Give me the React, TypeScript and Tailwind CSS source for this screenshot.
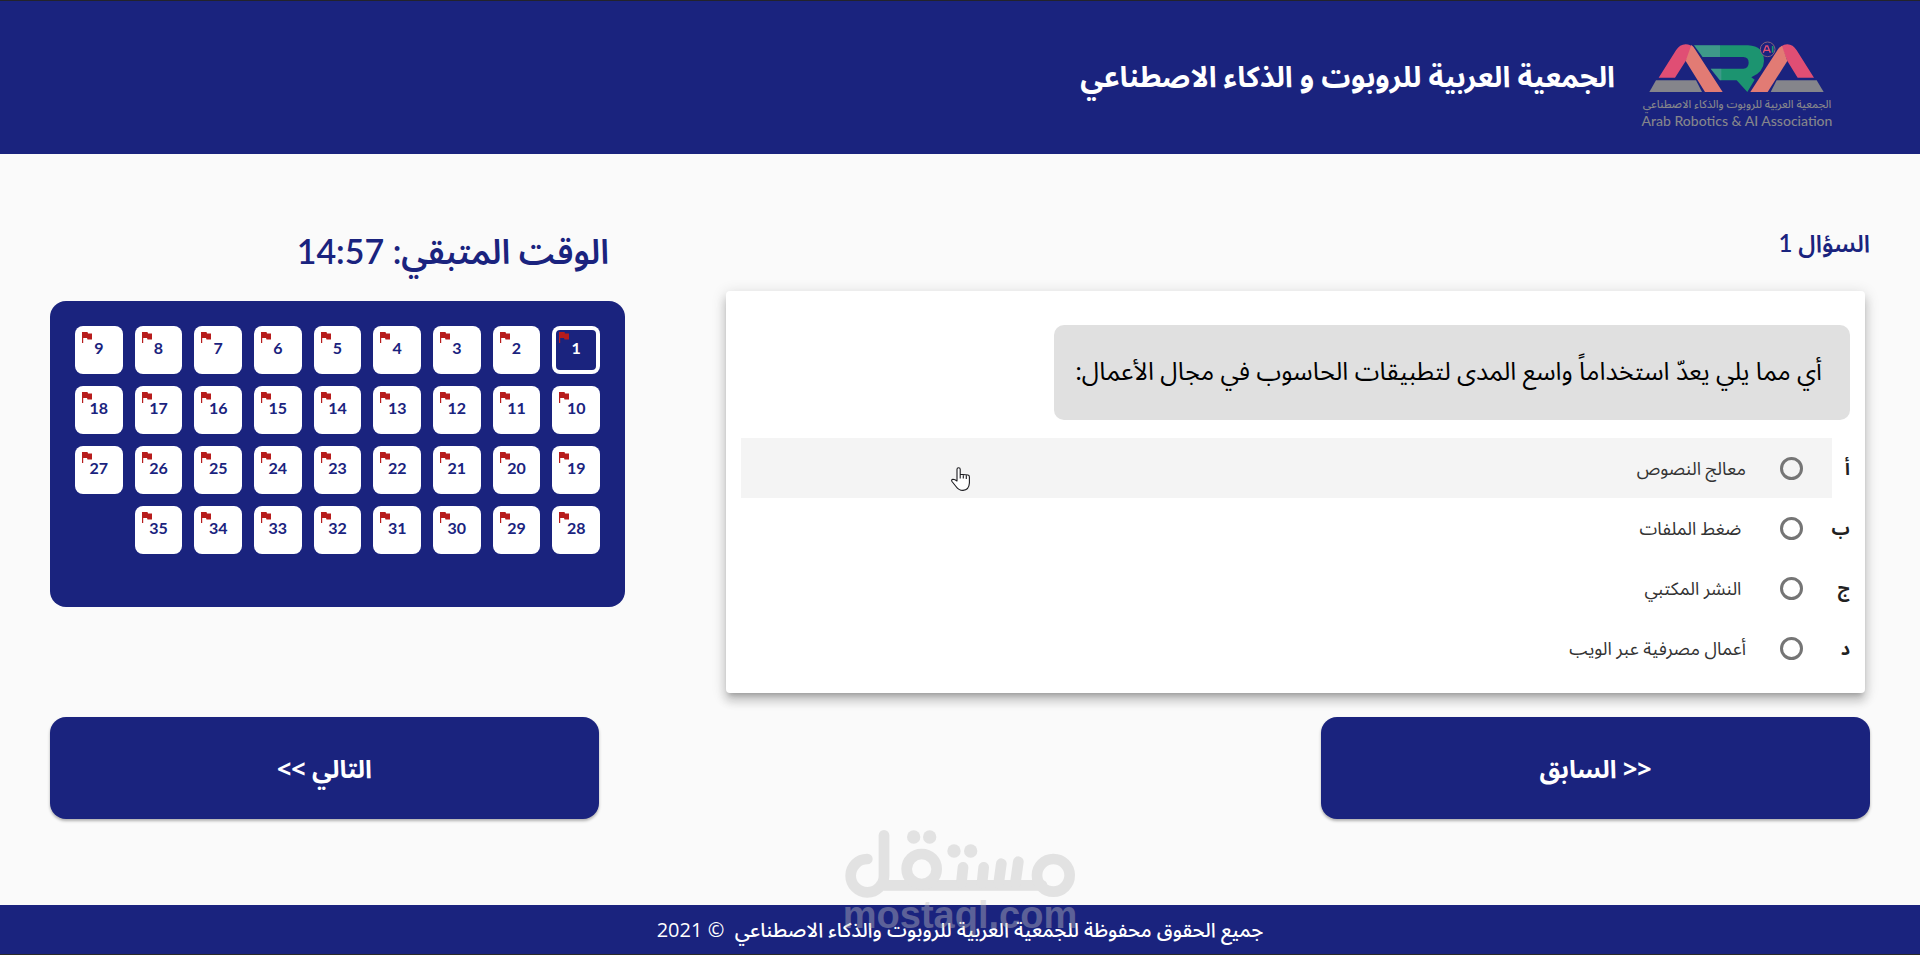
import { useState } from "react";

const QUESTION_COUNT = 35;

const options = [
  { letter: "أ", text: "معالج النصوص" },
  { letter: "ب", text: " ضغط الملفات" },
  { letter: "ج", text: " النشر المكتبي" },
  { letter: "د", text: "أعمال مصرفية عبر الويب" },
];

function Logo() {
  return (
    <div className="flex w-[190px] flex-col items-center pt-[14px] text-[#85858b]">
      <svg viewBox="66 32 570 159" className="h-[53px] w-[190px]" aria-hidden="true">
        <path d="M116 145 168 63Q179 45 197 45Q212 45 222 57L197 95 165 145Z" fill="#e04e74" />
        <path d="M197 95 214 47Q220 51 225 60L308 188H255Z" fill="#e27b74" />
        <path d="M108 153H228L246 188H88Z" fill="#85858b" />
        <path
          d="M222 48H384Q432 50 432 95Q431 128 394 144L404 151 382 188 350 153H300L272 118H370Q386 116 386 100Q386 84 370 83H248Z"
          fill="#1c9470"
        />
        <path d="M222 48H300V83H248ZM272 118H304V153H299Z" fill="#7fa4b8" opacity="0.35" />
        <path d="M582 145 530 63Q519 45 502 45Q492 45 484 51L502 95 533 145Z" fill="#e04e74" />
        <path d="M502 95 486 49Q479 53 474 60L391 188H443Z" fill="#e27b74" />
        <path d="M470 153H590L611 188H452Z" fill="#85858b" />
        <circle cx="443" cy="60" r="22" fill="#1a237e" stroke="#85617f" strokeWidth="3" />
        <path d="M430 70 438 50H443L451 70M434 63H447" fill="none" stroke="#e04e74" strokeWidth="4" />
        <path d="M458 50V70" stroke="#1c9470" strokeWidth="5" />
      </svg>
      <span className="mt-1 font-['Noto_Sans_Arabic','DejaVu_Sans',sans-serif] text-[11px] leading-4 font-medium whitespace-nowrap">
        الجمعية العربية للروبوت والذكاء الاصطناعي
      </span>
      <span dir="ltr" className="font-[Lato,sans-serif] text-[14px] leading-4 font-medium whitespace-nowrap">
        Arab Robotics &amp; AI Association
      </span>
    </div>
  );
}

function Flag() {
  return (
    <svg viewBox="0 0 10 11" className="absolute top-[6px] left-[7px] h-[11px] w-[10px]" aria-hidden="true">
      <path d="M0 0H5.500L6 1.500H10V7.500H5.500L5 6H1.200V11H0Z" fill="#b71c1c" />
    </svg>
  );
}

function HandPointer() {
  return (
    <svg viewBox="0 0 19 24" className="absolute top-[29px] left-[210px] h-6 w-[19px]" aria-hidden="true">
      <path
        d="M6 14V2.300A1.600 1.600 0 0 1 9.200 2.300V7.200L17 8Q18.400 8.300 18.400 10V16Q18 23 12 23.400Q7.500 23.400 5 19.500L1 14.500Q0 12.500 2 12.300Q4 12.300 6 14ZM9.200 7V11.500M12.300 7.500V11.500M15.300 7.800V12"
        fill="#fff"
        stroke="#1b1b1f"
        strokeWidth="1.100"
        strokeLinejoin="round"
      />
    </svg>
  );
}

function Watermark() {
  return (
    <div
      dir="ltr"
      className="pointer-events-none absolute bottom-[23px] left-1/2 flex w-[260px] -translate-x-1/2 flex-col items-center text-[#bfbfbf] opacity-40"
    >
      <svg viewBox="0 24 780 210" className="h-[70px] w-[260px]" aria-hidden="true">
        <g fill="none" stroke="currentColor" strokeWidth="32" strokeLinecap="round">
          <path d="M112 117A50 50 0 1 0 162 168V46M152 196H636" />
          <circle cx="275" cy="147" r="45" />
          <circle cx="670" cy="166" r="49" />
          <path d="M399 142 394 190M461 142 456 190M514 131 506 190M565 125 556 190" />
        </g>
        <g fill="currentColor">
          <circle cx="251" cy="51" r="20" />
          <circle cx="299" cy="51" r="20" />
          <circle cx="372" cy="93" r="20" />
          <circle cx="422" cy="93" r="20" />
        </g>
      </svg>
      <span className="font-['Liberation_Sans',sans-serif] text-[38px] leading-[34px] font-bold">mostaql.com</span>
    </div>
  );
}

export default function App() {
  const [current, setCurrent] = useState(1);
  const [answer, setAnswer] = useState<string | null>(null);
  const numbers = Array.from({ length: QUESTION_COUNT }, (_, i) => i + 1);

  return (
    <div
      dir="rtl"
      lang="ar"
      className="relative flex min-h-screen flex-col bg-[#fafafa] font-[Lato,'Noto_Sans_Arabic','DejaVu_Sans',sans-serif] text-[#212121]"
    >
      <header className="flex h-[154px] items-center gap-[27px] border-t border-[#23232b] bg-[#1a237e] px-[88px]">
        <Logo />
        <h1 className="pb-1 text-[29px] leading-[40px] font-bold text-white">
          الجمعية العربية للروبوت و الذكاء الاصطناعي
        </h1>
      </header>

      <main className="flex grow flex-col gap-6 px-[50px] pt-[69px] pb-[86px]">
        <div className="grid grid-cols-[1144fr_575fr] gap-x-[101px]">
          <section>
            <h2 className="mb-[28px] text-[24px] leading-[40px] font-semibold text-[#1a237e]">السؤال 1</h2>
            <div className="ms-[5px] rounded bg-white px-[15px] pt-[34px] pb-[15px] shadow-[0_5px_5px_-3px_rgba(0,0,0,0.2),0_8px_10px_1px_rgba(0,0,0,0.14),0_3px_14px_2px_rgba(0,0,0,0.12)]">
              <p className="w-fit rounded-[10px] bg-[#e0e0e0] ps-[28px] pe-[22px] pt-[25px] pb-[29px] text-[25px] leading-[41px] font-normal text-black">
                أي مما يلي يعدّ استخداماً واسع المدى لتطبيقات الحاسوب في مجال الأعمال:
              </p>
              <div role="radiogroup" className="mt-[18px]">
                {options.map((o, i) => (
                  <div key={o.letter} className="flex h-[60px] items-center">
                    <span className="w-[18px] text-[18px] leading-6 font-bold">{o.letter}</span>
                    <label
                      className={
                        i === 0
                          ? "relative flex h-full grow items-center gap-[34px] bg-[#f4f4f4] ps-[29px]"
                          : "relative flex h-full grow items-center gap-[34px] ps-[29px]"
                      }
                    >
                      <input
                        type="radio"
                        name="answer"
                        value={o.letter}
                        checked={answer === o.letter}
                        onChange={() => setAnswer(o.letter)}
                        className="h-[23px] w-[23px] appearance-none rounded-full border-[3px] border-[#757575] checked:bg-[#1a237e]"
                      />
                      <span className="text-[18px] leading-6 whitespace-pre text-[#333333]">{o.text}</span>
                      {i === 0 && <HandPointer />}
                    </label>
                  </div>
                ))}
              </div>
            </div>
          </section>

          <aside>
            <p className="mt-1 mb-[26px] px-4 text-[34px] leading-[48px] font-semibold text-[#1a237e]">
              الوقت المتبقي: 14:57
            </p>
            <nav className="grid grid-cols-9 gap-3 rounded-2xl bg-[#1a237e] px-[25px] pt-[25px] pb-[53px]">
              {numbers.map((n) => (
                <button
                  key={n}
                  type="button"
                  onClick={() => setCurrent(n)}
                  className={
                    n === current
                      ? "relative h-12 rounded-lg bg-[#1a237e] pb-1 text-[16px] leading-6 font-bold text-white ring-4 ring-white ring-inset"
                      : "relative h-12 rounded-lg bg-white pb-1 text-[16px] leading-6 font-bold text-[#1a237e]"
                  }
                >
                  <Flag />
                  {n}
                </button>
              ))}
            </nav>
          </aside>
        </div>

        <div className="flex justify-between">
          <button
            type="button"
            className="h-[102px] w-[30.15%] rounded-2xl bg-[#1a237e] font-['Open_Sans','Noto_Sans_Arabic','DejaVu_Sans',sans-serif] text-[25px] leading-8 font-bold text-white shadow-[0_2px_3px_rgba(0,0,0,0.3)]"
          >
            &lt;&lt; السابق
          </button>
          <button
            type="button"
            className="h-[102px] w-[30.15%] rounded-2xl bg-[#1a237e] font-['Open_Sans','Noto_Sans_Arabic','DejaVu_Sans',sans-serif] text-[25px] leading-8 font-bold text-white shadow-[0_2px_3px_rgba(0,0,0,0.3)]"
          >
            التالي &gt;&gt;
          </button>
        </div>
      </main>

      <footer className="flex h-[50px] items-center justify-center border-b border-[#2b2b2b] bg-[#1a237e] font-['Open_Sans','Noto_Sans_Arabic','DejaVu_Sans',sans-serif] text-[20px] leading-8 font-medium whitespace-pre text-white">
        {"جميع الحقوق محفوظة للجمعية العربية للروبوت والذكاء الاصطناعي  © 2021"}
      </footer>

      <Watermark />
    </div>
  );
}
